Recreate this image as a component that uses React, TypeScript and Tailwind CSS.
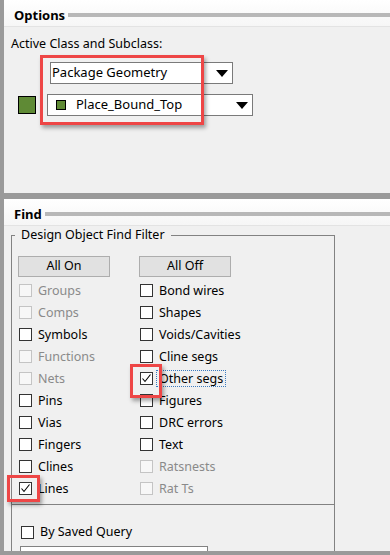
import React from "react";

type Item = { label: string; disabled?: boolean; checked?: boolean; focus?: boolean };

const left: Item[] = [
  { label: "Groups", disabled: true },
  { label: "Comps", disabled: true },
  { label: "Symbols" },
  { label: "Functions", disabled: true },
  { label: "Nets", disabled: true },
  { label: "Pins" },
  { label: "Vias" },
  { label: "Fingers" },
  { label: "Clines" },
  { label: "Lines", checked: true },
];

const right: Item[] = [
  { label: "Bond wires" },
  { label: "Shapes" },
  { label: "Voids/Cavities" },
  { label: "Cline segs" },
  { label: "Other segs", checked: true, focus: true },
  { label: "Figures" },
  { label: "DRC errors" },
  { label: "Text" },
  { label: "Ratsnests", disabled: true },
  { label: "Rat Ts", disabled: true },
];

function Box({ checked, disabled }: { checked?: boolean; disabled?: boolean }) {
  return (
    <span
      className={
        "flex h-[13px] w-[13px] shrink-0 items-center justify-center border " +
        (disabled ? "border-[#c4c4c4] bg-[#f7f7f7]" : "border-[#333333] bg-white")
      }
    >
      {checked && (
        <svg width="11" height="11" viewBox="0 0 11 11">
          <path d="M1.5 5.5 L4 8.5 L9.5 1.5" fill="none" stroke="#000" strokeWidth="1.1" />
        </svg>
      )}
    </span>
  );
}

function Check({ item }: { item: Item }) {
  return (
    <div className="flex h-[22px] items-center">
      <Box checked={item.checked} disabled={item.disabled} />
      <span
        className={
          "ml-[4px] px-[2px] leading-[15px] " +
          (item.disabled ? "text-[#8a8a8a]" : "text-black") +
          (item.focus ? " outline outline-1 outline-dotted outline-[#3b7bbf]" : "")
        }
      >
        {item.label}
      </span>
    </div>
  );
}

function Header({ title }: { title: string }) {
  return (
    <div className="flex h-[27px] shrink-0 items-center border-b border-[#e3e3e3] bg-gradient-to-b from-white to-[#f6f6f6] pl-[10px] pt-[3px]">
      <span className="text-[13px] font-bold leading-[18px] text-black">{title}</span>
      <div className="ml-[3px] h-[4px] flex-1 bg-[#b8b8b8]" />
    </div>
  );
}

function Arrow() {
  return (
    <svg width="12" height="7" viewBox="0 0 12 7">
      <path d="M0 0 H12 L6 7 Z" fill="#000" />
    </svg>
  );
}

const red = "pointer-events-none absolute border-[3px] border-[#ee4646] shadow-[2px_3px_4px_rgba(0,0,0,0.35)]";

export default function App() {
  return (
    <div
      className="relative flex h-[555px] w-[390px] flex-col overflow-hidden bg-white text-[12.5px]"
      style={{ fontFamily: '"Noto Sans", "Open Sans", sans-serif' }}
    >
      <div className="flex h-[551px] shrink-0">
        <div className="w-[4px] bg-[#9a9a9a]" />
        <div className="flex flex-1 flex-col bg-[#f0f0f0]">
          {/* Options */}
          <Header title="Options" />
          <div className="h-[166px] shrink-0 pl-[7px] pt-[8px]">
            <div className="leading-[17px] text-black">Active Class and Subclass:</div>
            <div className="ml-[39px] mt-[10px] flex h-[22px] w-[183px] items-center justify-between border border-[#7a7a7a] bg-white pl-[1px] pr-[4px]">
              <span className="text-[13px] text-black">Package Geometry</span>
              <Arrow />
            </div>
            <div className="mt-[10px] flex items-center">
              <div className="ml-[7px] h-[18px] w-[18px] border border-black bg-[#5f8a35]" />
              <div className="ml-[11px] flex h-[22px] w-[206px] items-center border border-[#7a7a7a] bg-white pl-[8px] pr-[4px]">
                <span className="h-[10px] w-[10px] border border-black bg-[#5f8a35]" />
                <span className="ml-[10px] flex-1 text-[13px] text-black">Place_Bound_Top</span>
                <Arrow />
              </div>
            </div>
          </div>
          <div className="h-[6px] shrink-0 bg-[#9a9a9a]" />

          {/* Find */}
          <Header title="Find" />
          <div className="flex min-h-0 flex-1 flex-col pl-[7px]">
            <fieldset className="mt-[1px] w-[324px] shrink-0 border border-[#828282] px-[6px] pb-[5px] pt-[13px]">
              <legend className="ml-[-3px] px-[6px] leading-[16px] text-black">Design Object Find Filter</legend>
              <div className="grid grid-cols-[121px_121px]">
                <div className="flex h-[21px] w-[92px] items-center justify-center border border-[#adadad] bg-[#e1e1e1] text-black">All On</div>
                <div className="flex h-[21px] w-[92px] items-center justify-center border border-[#adadad] bg-[#e1e1e1] text-black">All Off</div>
              </div>
              <div className="mt-[2px] grid grid-cols-[121px_121px] pl-[1px]">
                <div>
                  {left.map((it) => (
                    <Check key={it.label} item={it} />
                  ))}
                </div>
                <div>
                  {right.map((it) => (
                    <Check key={it.label} item={it} />
                  ))}
                </div>
              </div>
            </fieldset>
            <div className="flex min-h-0 w-[324px] flex-1 flex-col overflow-hidden border-x border-[#828282] pl-[9px] pt-[18px]">
              <div className="flex items-center">
                <Box />
                <span className="ml-[6px] text-black">By Saved Query</span>
              </div>
              <div className="ml-[-1px] mt-[4px] h-[10px] w-[188px] shrink-0 border border-[#828282] bg-white" />
            </div>
          </div>
        </div>
      </div>
      <div className="h-[5px] shrink-0 bg-[#9a9a9a]" />
      <div className="flex-1 bg-white" />

      {/* highlight boxes */}
      <div className={red + " left-[40px] top-[55px] h-[70px] w-[164px]"} />
      <div className={red + " left-[130px] top-[364px] h-[34px] w-[32px]"} />
      <div className={red + " left-[7px] top-[475px] h-[27px] w-[33px]"} />
    </div>
  );
}
